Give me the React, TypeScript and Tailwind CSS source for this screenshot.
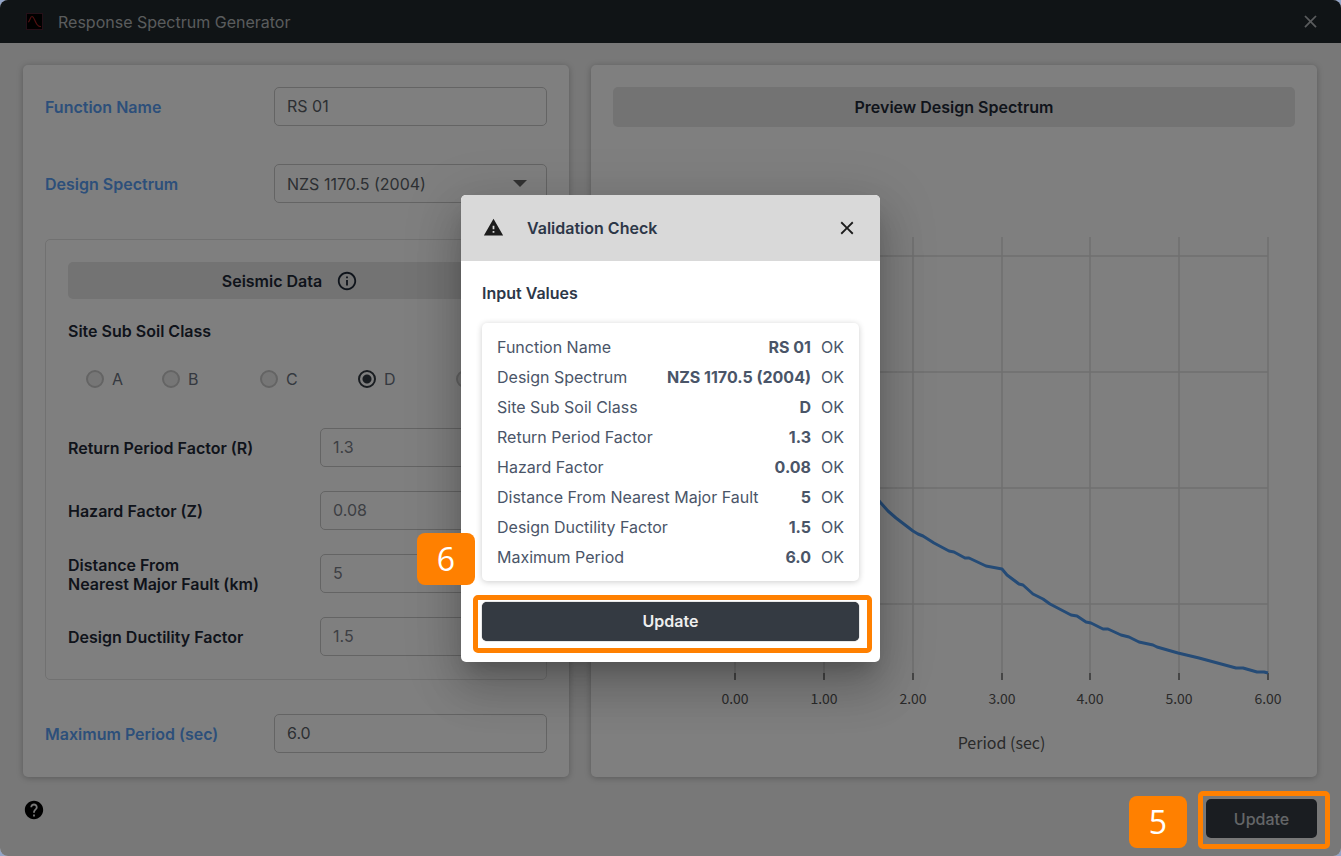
import { useState } from "react";
import type { ReactNode } from "react";
import { MdClose, MdHelp, MdInfoOutline, MdWarning } from "react-icons/md";

const SOIL_CLASSES = ["A", "B", "C", "D", "E"];

const PERIOD_TICKS = [0, 1, 2, 3, 4, 5, 6];
const GRID_ROWS = [19, 135, 251, 367];
const PLOT_WIDTH = 533;
const PLOT_HEIGHT = 436;

const SPECTRUM_POINTS = [
  [0, 180], [9, 40], [36, 40], [60, 112], [90, 190], [118, 232], [145, 265],
  [153, 274], [161, 281], [178, 294], [183, 297], [188, 299], [199, 306],
  [214, 314], [219, 315], [230, 321], [234, 321], [251, 329], [267, 332],
  [272, 338], [284, 347], [288, 348], [298, 357], [308, 362], [315, 367],
  [336, 378], [342, 379], [351, 385], [356, 386], [368, 392], [373, 392],
  [386, 398], [394, 400], [404, 405], [418, 408], [422, 410], [443, 416],
  [464, 421], [501, 431], [508, 431], [522, 435], [529, 435], [533, 436],
];

const CHECKS = [
  { label: "Function Name", value: "RS 01" },
  { label: "Design Spectrum", value: "NZS 1170.5 (2004)" },
  { label: "Site Sub Soil Class", value: "D" },
  { label: "Return Period Factor", value: "1.3" },
  { label: "Hazard Factor", value: "0.08" },
  { label: "Distance From Nearest Major Fault", value: "5" },
  { label: "Design Ductility Factor", value: "1.5" },
  { label: "Maximum Period", value: "6.0" },
];

const SEISMIC_FIELDS: { id: string; label: ReactNode; value: string }[] = [
  { id: "return-period", label: "Return Period Factor (R)", value: "1.3" },
  { id: "hazard", label: "Hazard Factor (Z)", value: "0.08" },
  { id: "fault", label: <>Distance From<br />Nearest Major Fault (km)</>, value: "5" },
  { id: "ductility", label: "Design Ductility Factor", value: "1.5" },
];

const fieldClass =
  "h-[39px] w-full rounded-[5px] border border-[#c8c8c8] bg-white px-3 text-base outline-none";

function TopField({ id, label, children }: { id: string; label: string; children: ReactNode }) {
  return (
    <div className="flex items-center justify-between">
      <label htmlFor={id} className="font-semibold text-[#5a9ff5]">{label}</label>
      <div className="relative w-[273px]">{children}</div>
    </div>
  );
}

function StepBadge({ step, className }: { step: number; className: string }) {
  return (
    <span
      className={`absolute z-50 flex h-[52px] w-[58px] items-center justify-center rounded-lg bg-[#ff8000] font-['Open_Sans',sans-serif] text-[32px] leading-none text-white ${className}`}
    >
      {step}
    </span>
  );
}

function SpectrumChart() {
  return (
    <svg viewBox="0 0 682 628" className="w-full" role="img" aria-label="Design spectrum">
      <g transform="translate(122 110)">
        {GRID_ROWS.map((y) => (
          <line key={y} x1={0} x2={PLOT_WIDTH} y1={y} y2={y} stroke="#dedede" strokeWidth={1.5} />
        ))}
        {PERIOD_TICKS.map((tick) => {
          const x = Math.round((tick * PLOT_WIDTH) / 6);
          return (
            <g key={tick}>
              <line x1={x} x2={x} y1={0} y2={PLOT_HEIGHT} stroke="#dedede" strokeWidth={1.5} />
              <line x1={x} x2={x} y1={PLOT_HEIGHT} y2={PLOT_HEIGHT + 7} stroke="#666666" strokeWidth={1.5} />
              <text
                x={x}
                y={467}
                textAnchor="middle"
                fill="#555555"
                className="font-['Noto_Sans_CJK_KR','Noto_Sans',sans-serif] text-[14px]"
              >
                {tick.toFixed(2)}
              </text>
            </g>
          );
        })}
        <polyline
          points={SPECTRUM_POINTS.map((p) => p.join(",")).join(" ")}
          fill="none"
          stroke="#4a96ec"
          strokeWidth={3}
          strokeLinejoin="round"
        />
        <text
          x={PLOT_WIDTH / 2}
          y={512}
          textAnchor="middle"
          fill="#555555"
          className="font-['Noto_Sans_CJK_KR','Noto_Sans',sans-serif] text-[16px]"
        >
          Period (sec)
        </text>
      </g>
    </svg>
  );
}

function ValidationDialog() {
  return (
    <div className="absolute inset-0 z-40 flex items-center justify-center rounded-lg bg-black/50">
      <div
        role="dialog"
        aria-labelledby="dialog-title"
        className="w-[419px] rounded-[5px] bg-white text-[#2d3748] shadow-[0_13px_18px_-8px_rgba(0,0,0,0.2),0_28px_44px_4px_rgba(0,0,0,0.14),0_11px_54px_9px_rgba(0,0,0,0.12)]"
      >
        <header className="flex h-[66px] items-center rounded-t-[5px] bg-[#d9d9d9] px-[22px]">
          <MdWarning size={21} className="text-[#1c1c1c]" />
          <h2 id="dialog-title" className="ml-[23px] flex-1 font-semibold">Validation Check</h2>
          <button aria-label="Close" className="text-[#1c1c1c]">
            <MdClose size={22} />
          </button>
        </header>
        <div className="px-[21px] pt-5 pb-[21px]">
          <h3 className="font-semibold">Input Values</h3>
          <div className="mt-[18px] rounded-[5px] px-[15px] py-[9px] shadow-[0_1px_6px_rgba(0,0,0,0.2)]">
            <table className="block text-[#4a5568]">
              <tbody className="block">
                {CHECKS.map(({ label, value }) => (
                  <tr key={label} className="flex h-[30px] items-center">
                    <th scope="row" className="flex-1 text-left font-normal">{label}</th>
                    <td className="font-bold">{value}</td>
                    <td className="w-[33px] text-right">OK</td>
                  </tr>
                ))}
              </tbody>
            </table>
          </div>
          <div className="relative mt-[21px]">
            <button className="h-[39px] w-full rounded-[5px] bg-[#343a42] font-semibold text-[#eeeeee] shadow-[0_0_1px_#111]">
              Update
            </button>
            <span className="pointer-events-none absolute -top-[7px] -right-[13px] -bottom-3 -left-[9px] rounded-[5px] border-5 border-[#ff8000]" />
            <StepBadge step={6} className="-top-[69px] -left-[65px]" />
          </div>
        </div>
      </div>
    </div>
  );
}

export default function App() {
  const [soilClass, setSoilClass] = useState("D");

  return (
    <div className="flex min-h-screen bg-[#93a5c8] font-[Inter,sans-serif] text-base text-[#1f2937]">
      <div className="relative flex flex-1 flex-col rounded-lg bg-[#f0f0f0]">
        {/* Title bar */}
        <header className="flex h-[43px] items-center rounded-t-lg bg-[#20282d] pr-5 pl-[26px] text-[#b4b8ba]">
          <svg width="17" height="17" viewBox="0 0 17 17" fill="none">
            <rect x="0.5" y="0.5" width="16" height="16" fill="#000" stroke="#4a2030" />
            <path d="M2 9C4 9 4 3.5 6 3.5S9 9 11 11.5s2 2 4 2" stroke="#a02020" strokeWidth="1.2" />
          </svg>
          <h1 className="ml-[15px] flex-1">Response Spectrum Generator</h1>
          <button aria-label="Close window">
            <MdClose size={21} />
          </button>
        </header>

        <main className="flex flex-1 gap-[22px] pt-[22px] pr-6 pl-[23px]">
          {/* Input form */}
          <section className="w-[546px] shrink-0 rounded-[5px] bg-white px-[22px] pt-[22px] pb-6 shadow-[0_1px_6px_rgba(0,0,0,0.25)]">
            <TopField id="function-name" label="Function Name">
              <input id="function-name" defaultValue="RS 01" className={`${fieldClass} pb-0.5 text-[#5a5f66]`} />
            </TopField>
            <div className="mt-[38px]">
              <TopField id="design-spectrum" label="Design Spectrum">
                <select id="design-spectrum" className={`${fieldClass} appearance-none text-[#5a5f66]`}>
                  <option>NZS 1170.5 (2004)</option>
                </select>
                <svg width="14" height="7" viewBox="0 0 14 7" className="pointer-events-none absolute top-4 right-5 fill-[#666666]">
                  <path d="M0 0h14L7 7z" />
                </svg>
              </TopField>
            </div>

            <div className="mt-9 rounded-[5px] border border-[#e2e2e2] px-[22px] pt-[22px] pb-[23px]">
              <div className="flex h-[37px] items-center justify-center gap-3.5 rounded-[5px] bg-[#e6e6e6] pr-3">
                <h2 className="font-semibold">Seismic Data</h2>
                <MdInfoOutline size={22} />
              </div>
              <fieldset>
                <legend className="pt-5 font-semibold">Site Sub Soil Class</legend>
                <div className="mt-6 flex pl-[18px]">
                  {SOIL_CLASSES.map((name, i) => (
                    <label
                      key={name}
                      className={`flex shrink-0 items-center gap-2 text-[#6b7280] ${i === 0 ? "w-[76px]" : "w-[98px] last:w-auto"}`}
                    >
                      <input
                        type="radio"
                        name="soil-class"
                        checked={soilClass === name}
                        onChange={() => setSoilClass(name)}
                        className="size-[18px] appearance-none rounded-full border-2 border-[#c8c8c8] bg-[#ececec] checked:border-[#333a42] checked:bg-[radial-gradient(#333a42_0_4px,#ffffff_5px)]"
                      />
                      {name}
                    </label>
                  ))}
                </div>
              </fieldset>
              <div className="mt-[37px] space-y-6">
                {SEISMIC_FIELDS.map(({ id, label, value }) => (
                  <div key={id} className="flex h-[39px] items-center justify-between">
                    <label htmlFor={id} className="pt-0.5 leading-[19px] font-semibold">{label}</label>
                    <div className="w-[204px]">
                      <input id={id} defaultValue={value} className={`${fieldClass} pb-0.5 text-[#7b8088]`} />
                    </div>
                  </div>
                ))}
              </div>
            </div>

            <div className="mt-[34px]">
              <TopField id="maximum-period" label="Maximum Period (sec)">
                <input id="maximum-period" defaultValue="6.0" className={`${fieldClass} pb-0.5 text-[#5a5f66]`} />
              </TopField>
            </div>
          </section>

          {/* Preview */}
          <section className="min-w-0 flex-1 rounded-[5px] bg-white px-[22px] pt-[22px] shadow-[0_1px_6px_rgba(0,0,0,0.25)]">
            <h2 className="flex h-10 items-center justify-center rounded-[5px] bg-[#e6e6e6] font-semibold">
              Preview Design Spectrum
            </h2>
            <SpectrumChart />
          </section>
        </main>

        <footer className="flex items-start justify-between pt-[22px] pr-6 pb-[18px] pl-[23px]">
          <button aria-label="Help" className="text-black">
            <MdHelp size={22} />
          </button>
          <div className="relative">
            <button className="h-[39px] w-[111px] rounded-[5px] bg-[#343a42] font-medium text-[#c8ccd0]">Update</button>
            <span className="pointer-events-none absolute -top-2 -right-[13px] -bottom-[11px] -left-2 z-50 rounded-[5px] border-5 border-[#ff8000]" />
            <StepBadge step={5} className="-top-[3px] -left-[77px]" />
          </div>
        </footer>

        <ValidationDialog />
      </div>
    </div>
  );
}
